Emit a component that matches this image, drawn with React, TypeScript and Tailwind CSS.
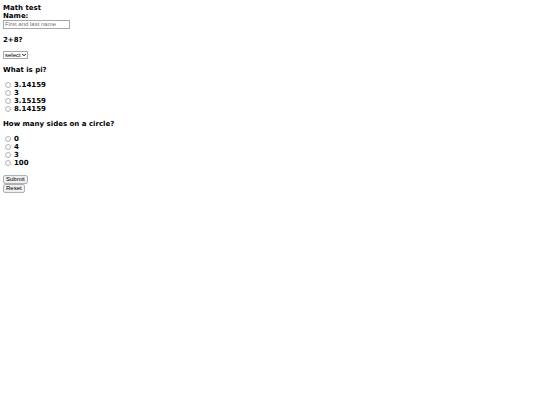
import { ChevronDown } from "lucide-react";

interface RadioQuestionProps {
  name: string;
  question: string;
  options: string[];
}

function RadioQuestion({ name, question, options }: RadioQuestionProps) {
  return (
    <fieldset className="mb-[7px]">
      <legend className="mb-[7px]">{question}</legend>
      {options.map((option) => (
        <label key={option} className="flex items-center gap-[3px] pl-0.5">
          <input
            type="radio"
            name={name}
            value={option}
            className="size-1.5 appearance-none rounded-full border border-[#b4b4b4] bg-white checked:bg-[#0075ff]"
          />
          {option}
        </label>
      ))}
    </fieldset>
  );
}

const buttonClass =
  "h-[9px] rounded-[2px] border border-[#b0b0b0] bg-[#efefef] px-[2px] text-[6px] leading-[7px] font-normal font-['Liberation_Sans',Arial,sans-serif]";

export default function App() {
  return (
    <form
      className="bg-white p-1 pl-[3px] text-[7px] leading-[8px] font-bold text-black font-['DejaVu_Sans',Verdana,sans-serif]"
      onSubmit={(e) => e.preventDefault()}
    >
      <h1>Math test</h1>
      <label htmlFor="name" className="block">
        Name:
      </label>
      <input
        id="name"
        type="text"
        placeholder="First and last name"
        className="block h-[9px] w-[67px] border border-[#a8a8a8] bg-white px-px pb-px text-[6px] leading-[6px] font-normal placeholder:text-[#757575] font-['Liberation_Sans',Arial,sans-serif]"
      />

      <label htmlFor="sum" className="my-[7px] block">
        2+8?
      </label>
      <div className="relative mb-[7px] w-fit">
        <select
          id="sum"
          defaultValue="select"
          className="block h-[8px] w-[25px] appearance-none border border-[#a8a8a8] bg-white pl-px text-[6px] leading-[6px] font-normal font-['Liberation_Sans',Arial,sans-serif]"
        >
          <option value="select">select</option>
          <option value="8">8</option>
          <option value="10">10</option>
          <option value="12">12</option>
        </select>
        <ChevronDown
          size={6}
          strokeWidth={4}
          className="pointer-events-none absolute top-px right-px"
        />
      </div>

      <RadioQuestion
        name="pi"
        question="What is pi?"
        options={["3.14159", "3", "3.15159", "8.14159"]}
      />
      <RadioQuestion
        name="circle"
        question="How many sides on a circle?"
        options={["0", "4", "3", "100"]}
      />

      <div className="flex flex-col items-start pt-px">
        <button type="submit" className={buttonClass}>
          Submit
        </button>
        <button type="reset" className={buttonClass}>
          Reset
        </button>
      </div>
    </form>
  );
}
